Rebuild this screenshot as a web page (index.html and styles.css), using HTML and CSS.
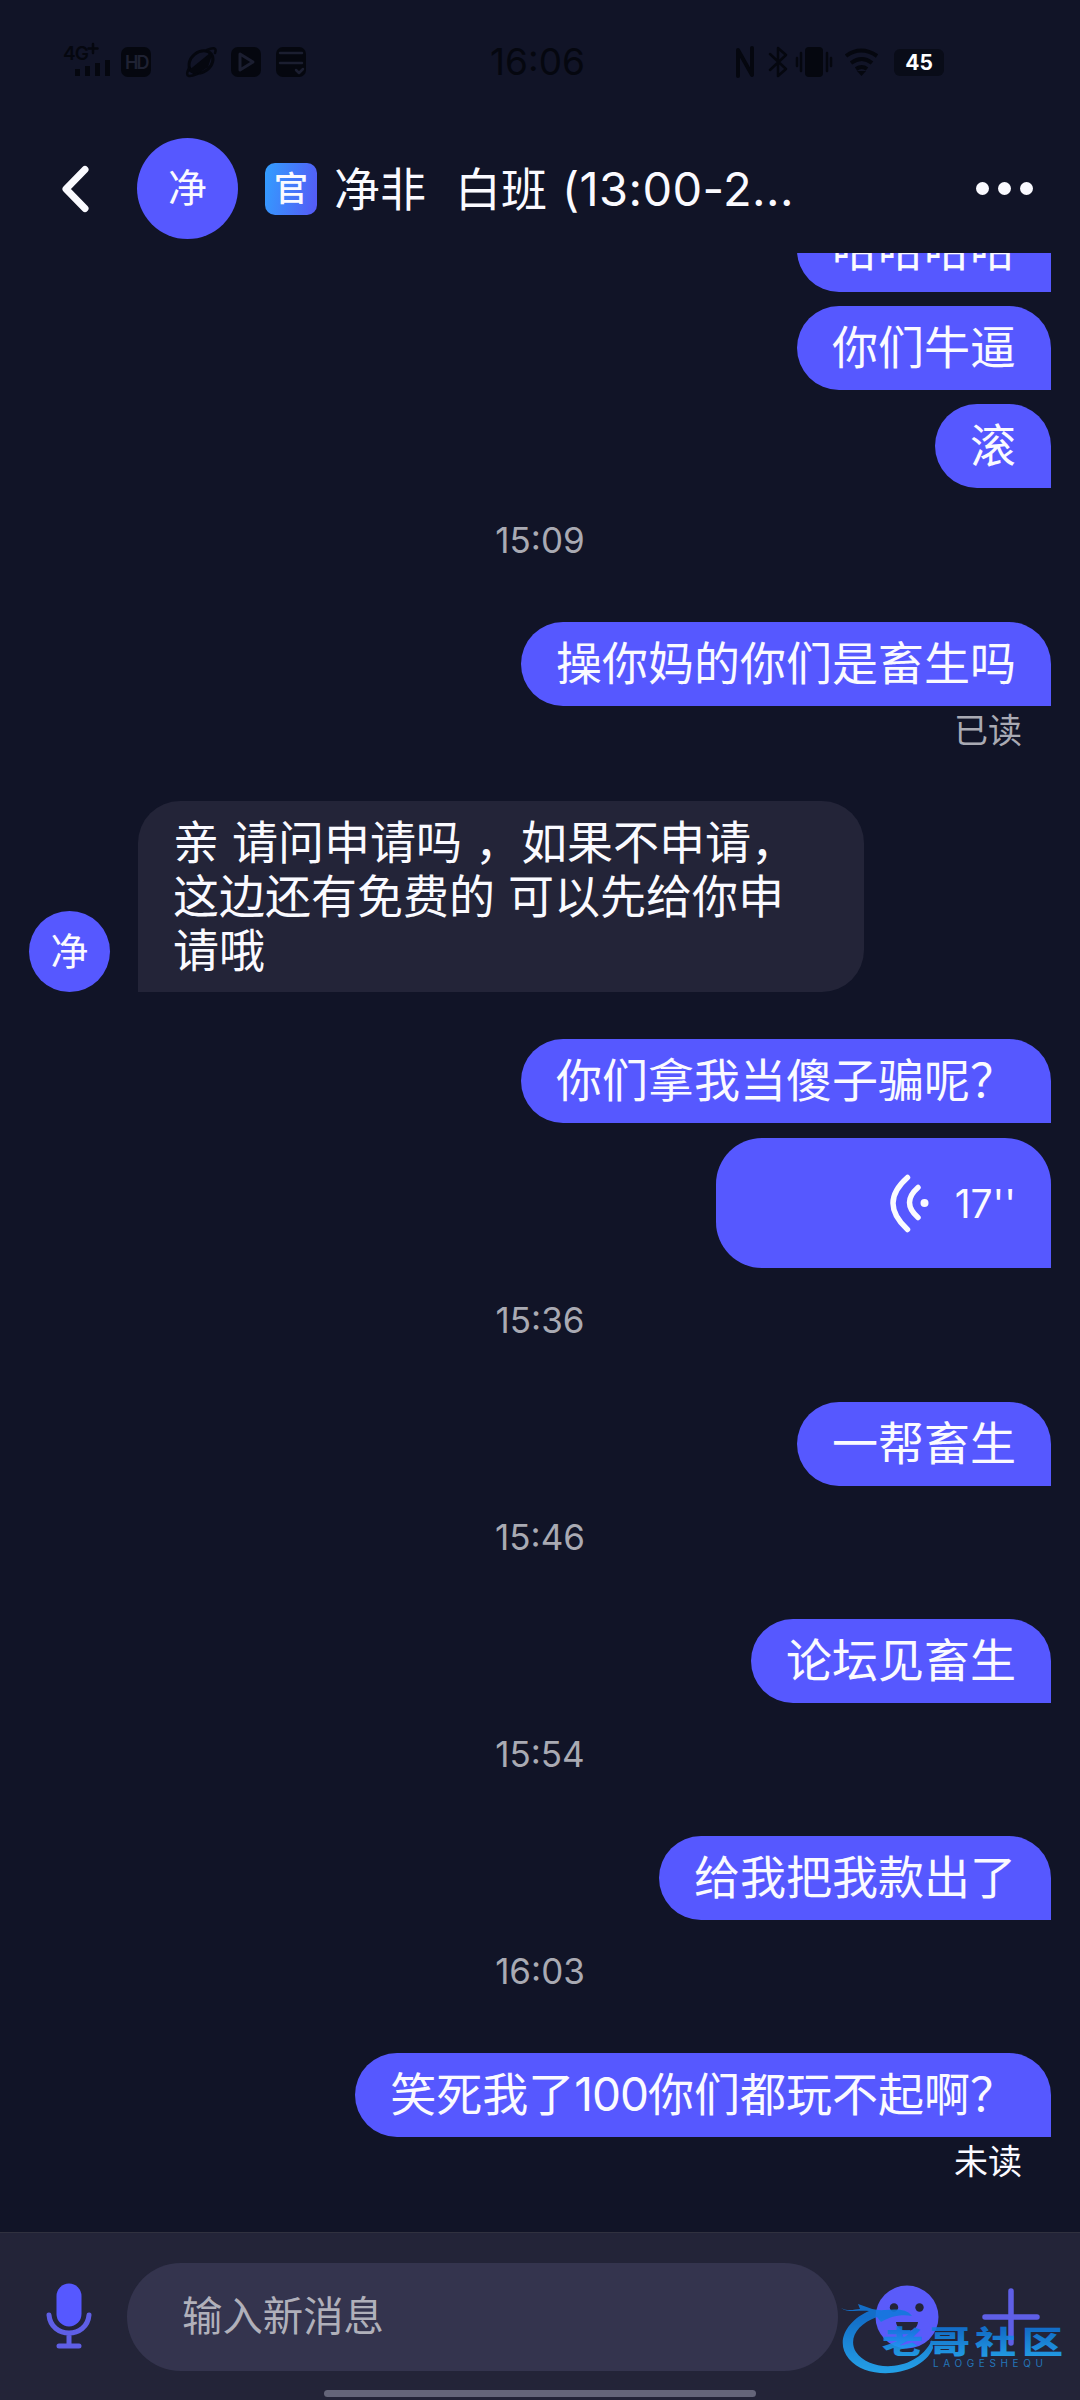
FILE: index.html
```html
<!DOCTYPE html>
<html lang="zh-CN">
<head>
<meta charset="utf-8">
<title>净非 白班</title>
<link rel="stylesheet" href="styles.css">
</head>
<body>
<div class="app">
  <div class="status">
    <svg class="status-icons" width="250" height="40" viewBox="60 42 250 40">
      <text class="net" x="63" y="60">4G</text>
      <path class="thin" d="M93 44v9M88.500 48.500h9"/>
      <path class="dim" d="M75 69h5v7h-5zM85 66h5v10h-5zM95 63h5v13h-5zM105 60h5v16h-5z"/>
      <rect class="dim" x="121" y="47" width="30" height="30" rx="7"/>
      <text class="hd" x="125" y="69">HD</text>
      <ellipse class="ring" cx="201" cy="62" rx="13" ry="10" transform="rotate(-38 201 62)"/>
      <path class="dim" d="M188 71l22-18 2 2-4 12-12 8z"/>
      <path class="thin" d="M189 68c-5 10 1 9 8 6M207 50c7-3 10-2 8 3"/>
      <rect class="dim" x="231" y="47" width="30" height="30" rx="7"/>
      <path class="hole" d="M240 54l13 8-13 8z"/>
      <rect class="dim" x="276" y="47" width="30" height="30" rx="7"/>
      <path class="hole-line" d="M280 53h22M280 63h22M296 70l3 3 4-4"/>
    </svg>
    <time class="clock">16:06</time>
    <svg class="status-icons" width="146" height="40" viewBox="734 42 146 40">
      <path class="nfc" d="M738 76V50l14 25V48"/>
      <path class="thin" d="M770 54l16 15-8 7V48l8 7-16 15"/>
      <rect class="dim" x="805" y="47" width="18" height="30" rx="4"/>
      <path class="thin" d="M801 53v18M797 58v8M827 53v18M831 58v8"/>
      <path class="wifi" d="M846 56q15-11 31 0M851 63q11-8 21 0M856 69q6-4 11 0"/>
      <path class="dim" d="M857 71h9l-4.500 5z"/>
    </svg>
    <span class="battery">45</span>
  </div>

  <header class="header">
    <svg class="back" width="30" height="50" viewBox="0 0 30 50"><path d="M25 5.500L6 25l19 19.500"/></svg>
    <span class="avatar avatar-lg">净</span>
    <span class="badge">官</span>
    <h1 class="title">净非<span class="gap"></span>白班<span class="hours">(13:00-2...</span></h1>
    <span class="more"><i></i><i></i><i></i></span>
  </header>

  <main class="chat">
    <div class="bubble out clipped">哈哈哈哈</div>
    <div class="bubble out">你们牛逼</div>
    <div class="bubble out">滚</div>
    <time class="stamp">15:09</time>
    <div class="bubble out">操你妈的你们是畜生吗</div>
    <div class="receipt">已读</div>
    <div class="incoming">
      <span class="avatar">净</span>
      <p class="bubble in">亲 请问申请吗 ，如果不申请，<br>这边还有免费的 可以先给你申<br>请哦</p>
    </div>
    <div class="bubble out">你们拿我当傻子骗呢？</div>
    <div class="bubble out voice">
      <svg width="40" height="60" viewBox="888 1172 40 60">
        <path d="M906.500 1176.500q-29 25.500 0 52M917 1186.500q-17 15 0 30"/>
        <circle cx="923.500" cy="1202" r="4"/>
      </svg>
      <span>17''</span>
    </div>
    <time class="stamp">15:36</time>
    <div class="bubble out">一帮畜生</div>
    <time class="stamp">15:46</time>
    <div class="bubble out">论坛见畜生</div>
    <time class="stamp">15:54</time>
    <div class="bubble out">给我把我款出了</div>
    <time class="stamp">16:03</time>
    <div class="bubble out">笑死我了<span class="num">100</span>你们都玩不起啊？</div>
    <div class="receipt unread">未读</div>
  </main>

  <footer class="composer">
    <svg class="mic" width="46" height="66" viewBox="0 0 46 66">
      <rect x="10.500" y="0.500" width="25" height="43" rx="12.500"/>
      <path d="M3 32c2 24 38 24 40 0M23 50v13M13 63h20"/>
    </svg>
    <div class="field">输入新消息</div>
    <svg class="smile" width="64" height="64" viewBox="0 0 64 64">
      <circle class="face" cx="32" cy="32" r="31.500"/>
      <circle cx="19" cy="22.500" r="4.200"/><circle cx="44.500" cy="22.500" r="4.200"/>
      <path d="M21 37h22c-1 12-21 12-22 0z"/>
    </svg>
    <svg class="plus" width="58" height="58" viewBox="0 0 58 58"><path d="M29 3v52M3 29h52"/></svg>
    <svg class="watermark" width="235" height="120" viewBox="835 2270 235 120">
      <defs>
        <linearGradient id="wm" x1="0" y1="0" x2="0" y2="1"><stop offset="0.200" stop-color="#1179dc"/><stop offset="1" stop-color="#25b2ff"/></linearGradient>
      </defs>
      <path fill="url(#wm)" d="M841 2308c8 4 14 1 19 1l-2-5c9 3 16 7 27 6 12-1 22-1 27 6-12-2-22 1-31 6l-4-5c-20 7-29 22-21 35 14 21 61 20 76-12l1 8c-11 28-65 34-84 11-15-18-1-39 20-48-10-1-22 2-28-3z"/>
      <text class="wm-cn" transform="translate(882 2353) scale(1 0.760)" x="0 47 93 140" y="0">老哥社区</text>
      <text class="wm-en" x="933" y="2367" textLength="110">LAOGESHEQU</text>
    </svg>
    <span class="home"></span>
  </footer>
</div>
</body>
</html>
```
FILE: styles.css
```css
* { box-sizing: border-box; }
body {
  margin: 0;
  background: #111427;
  color: #fafaff;
  font-family: Inter, "Noto Sans CJK SC", sans-serif;
}
.app { width: 1080px; height: 2400px; display: flex; flex-direction: column; overflow: hidden; }
svg { display: block; flex: none; fill: none; stroke-linecap: round; stroke-linejoin: round; }

.status { height: 124px; flex: none; display: flex; align-items: center; padding-left: 60px; }
.status .dim { fill: #05070f; }
.status .ring { stroke: #05070f; stroke-width: 3; }
.status .thin { stroke: #05070f; stroke-width: 2.5; }
.status .nfc { stroke: #05070f; stroke-width: 4; }
.status .wifi { stroke: #05070f; stroke-width: 4; stroke-linecap: butt; }
.status .hole { stroke: #1b1e30; stroke-width: 3; }
.status .hole-line { stroke: #1b1e30; stroke-width: 2.5; }
.net { fill: #05070f; font-size: 19px; font-weight: 600; letter-spacing: -1px; }
.hd { fill: #1f2233; font-size: 18px; font-weight: 600; letter-spacing: -2px; }
.clock { margin-left: 180px; width: 100px; color: #05070f; font-size: 37px; line-height: 40px; }
.clock + .status-icons { margin-left: 144px; }
.battery {
  margin-left: 14px; width: 50px; height: 27px; border-radius: 6px;
  background: #090c18; color: #fff; font-size: 21px; font-weight: 700;
  line-height: 27px; text-align: center;
}

.header { height: 129px; flex: none; display: flex; align-items: center; padding: 0 47px 0 60px; }
.back path { stroke: #fafaff; stroke-width: 7; }
.avatar {
  flex: none; width: 81px; height: 81px; border-radius: 50%; background: #5658ff;
  font-size: 38px; line-height: 80px; text-align: center;
}
.avatar-lg { margin-left: 47px; width: 101px; height: 101px; font-size: 39px; line-height: 100px; }
.badge {
  margin-left: 27px; width: 52px; height: 52px; border-radius: 10px;
  background: linear-gradient(100deg, #329fff, #5658f5);
  font-size: 34px; font-weight: 500; line-height: 52px; text-align: center;
}
.title { margin: 0 0 0 17px; font-size: 46px; font-weight: 400; line-height: 60px; white-space: nowrap; }
.title .gap { display: inline-block; width: 29px; }
.title .hours { margin-left: 15px; font-size: 47px; letter-spacing: 0.4px; }
.more { display: flex; gap: 9px; margin-left: auto; }
.more i { width: 13px; height: 13px; border-radius: 50%; background: #fafaff; }

.chat {
  flex: 1; min-height: 0; overflow: hidden;
  display: flex; flex-direction: column; align-items: flex-end;
  padding: 0 29px;
}
.bubble {
  flex: none; padding: 0 35px; border-radius: 42px;
  font-size: 46px; line-height: 83px; white-space: nowrap;
}
.out { height: 84px; background: #5658ff; border-bottom-right-radius: 0; }
.out + .out { margin-top: 14px; }
.clipped { margin-top: -45px; }
.num { letter-spacing: -1px; }
.stamp {
  flex: none; align-self: center; height: 134px; padding-top: 32px;
  color: #a9aab3; font-size: 35px; line-height: 40px;
}
.stamp + .out + .stamp { margin-top: -1px; }
.receipt { flex: none; height: 95px; padding: 5px 29px 0 0; color: #a9aab3; font-size: 34px; line-height: 40px; }
.unread { color: #fafaff; }
.incoming { flex: none; align-self: stretch; display: flex; align-items: flex-end; gap: 28px; margin-bottom: 47px; }
.in {
  margin: 0; width: 726px; height: 191px; padding-top: 14px;
  background: #232438; border-bottom-left-radius: 0; line-height: 54px;
}
.out + .voice {
  width: 335px; height: 130px; margin-top: 15px; border-radius: 46px 46px 0 46px;
  display: flex; align-items: center; justify-content: flex-end; gap: 26px; font-size: 39px;
}
.voice path { stroke: #fafaff; stroke-width: 5.5; }
.voice circle { fill: #fafaff; }

.composer {
  position: relative; flex: none; height: 168px; padding: 30px 39px 0 46px;
  display: flex; align-items: flex-start;
  background: #232438; border-top: 1px solid #30313f;
}
.mic { margin-top: 20px; }
.mic rect { fill: #5658ff; }
.mic path { stroke: #5f5fe6; stroke-width: 5; }
.field {
  margin-left: 35px; width: 711px; height: 108px; border-radius: 54px; padding-left: 55px;
  background: #34344e; color: #b0b0ba; font-size: 40.4px; line-height: 108px;
}
.smile { margin: 22px 0 0 37px; }
.smile circle, .smile path { fill: #232438; }
.smile .face { fill: #5a5bfa; }
.plus { margin: 25px 0 0 43px; }
.plus path { stroke: #5f5fe6; stroke-width: 5.5; }
.watermark { position: absolute; left: 835px; top: 37px; opacity: 0.88; }
.wm-cn { fill: url(#wm); font-size: 41px; font-weight: 900; }
.wm-en { fill: #2581ca; font-size: 10px; }
.home { position: absolute; left: 324px; bottom: 3px; width: 432px; height: 7px; border-radius: 4px; background: #646579; }
```
